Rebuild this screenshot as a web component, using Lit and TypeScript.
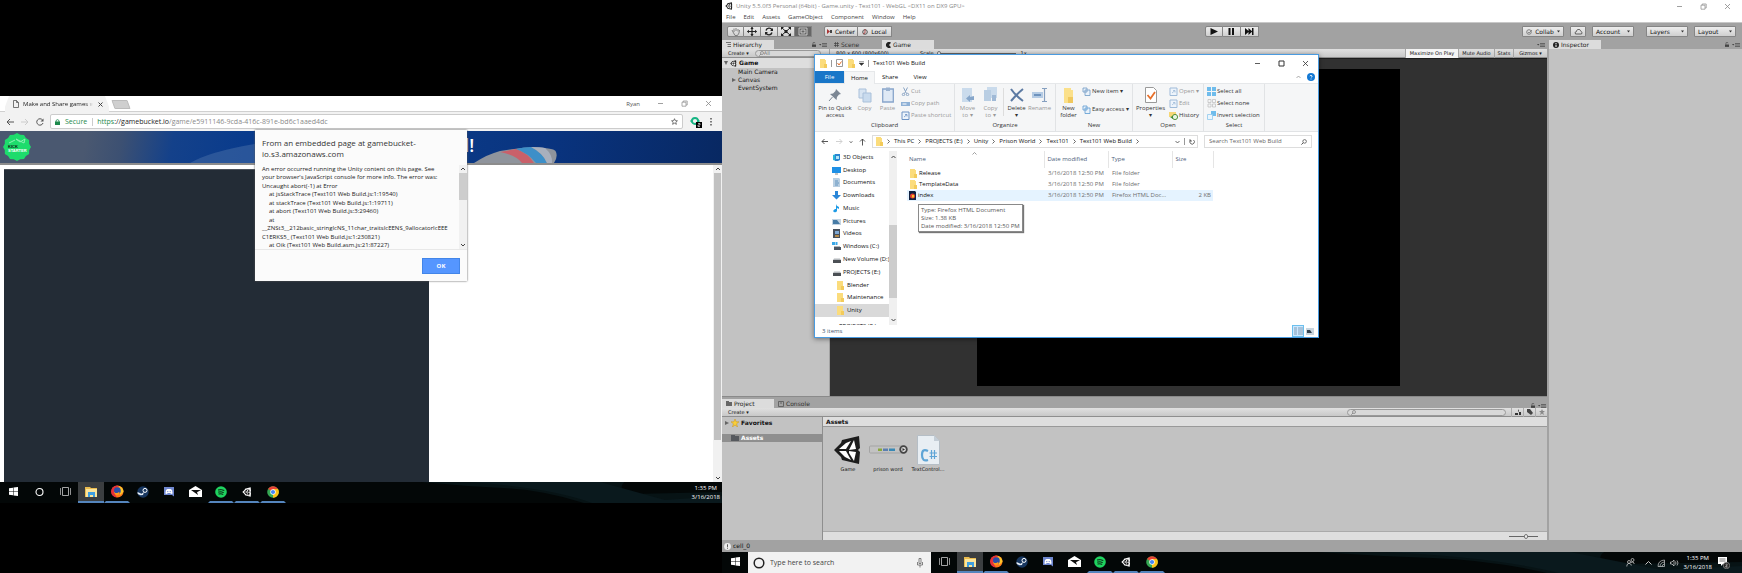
import { LitElement, html, css, svg, nothing } from "lit";
import { customElement, property } from "lit/decorators.js";
import { classMap } from "lit/directives/class-map.js";

const base = css`
  * { box-sizing: border-box; }
  button, input { font: inherit; color: inherit; margin: 0; padding: 0; border: 0; background: none; min-width: 0; outline: none; border-radius: 0; }
  button { display: flex; align-items: center; justify-content: center; white-space: nowrap; line-height: inherit; }
  a { color: inherit; text-decoration: none; }
  ul { list-style: none; margin: 0; padding: 0; }
  svg { display: block; flex: none; }
`;

const icon = (w: number, h: number, box: string, body: unknown) =>
  html`<svg width=${w} height=${h} viewBox=${box} fill="none" aria-hidden="true">${body}</svg>`;

/* ---- shared pictures ---- */
const winMin = icon(7, 7, "0 0 7 7", svg`<path d="M1 3.5h5" stroke="currentColor" stroke-width=".8"/>`);
const winMax = icon(7, 7, "0 0 7 7", svg`<path d="M1 1h5v5H1z" stroke="currentColor"/>`);
const winRestore = icon(7, 7, "0 0 7 7", svg`<path d="M1 2.2h4v4H1zM2.2 2V1h4v4H5.2" stroke="currentColor" stroke-width=".7"/>`);
const winClose = icon(7, 7, "0 0 7 7", svg`<path d="M1 1l5 5M6 1L1 6" stroke="currentColor" stroke-width=".8"/>`);
const folder = icon(8, 9, "0 0 8 9", svg`<path d="M1 0h5v1h1v8H1z" fill="#fbdc7c"/><path d="M5 5h3v4H5z" fill="#f3cb5b"/>`);
const unityMark = (s: number, c: string) =>
  icon(s, s, "0 0 30 30", svg`<path d="M1 15L8 8l1-3L26 1l1 12-2 2 2 2-1 12-17-4-1-3z" fill=${c}/><path d="M6 14l7-6 5-2-5 8zM21 5l2 9-7 1zM16 16l7 1-2 9-5-8zM6 16h7l5 9-6-3z" fill=${c === "#fff" ? "#111" : "#fff"}/>`);
const lockIcon = icon(4, 5, "0 0 5 6", svg`<path d="M0 3h5v3H0z" fill="#444"/><path d="M1.2 3V1.4a1.2 1.2 0 012.4 0" stroke="#444" stroke-width=".8"/>`);
const menuIcon = icon(8, 5, "0 0 8 5", svg`<path d="M0 2h2.4L1.2 3.5z" fill="#444"/><path d="M3 1.5h5M3 3h5M3 4.5h5" stroke="#555" stroke-width=".8"/>`);
const lens = icon(6, 6, "0 0 6 6", svg`<circle cx="3.6" cy="2.4" r="1.8" stroke="currentColor" stroke-width=".8"/><path d="M2.3 3.7L.4 5.6" stroke="currentColor"/>`);

/* ---- taskbar pictures ---- */
const appIcons: Record<string, unknown> = {
  start: icon(9, 9, "0 0 9 9", svg`<path d="M0 1.2L4 .7v3.5H0zM4.5.6L9 0v4.2H4.5zM0 4.8h4v3.5l-4-.5zM4.5 4.8H9V9l-4.5-.6z" fill="#fff"/>`),
  cortana: icon(9, 10, "0 0 9 10", svg`<circle cx="4.5" cy="5" r="3.5" stroke="#fff" stroke-width="1.1"/>`),
  views: icon(11, 9, "0 0 11 9", svg`<path d="M2.5.5h6v8h-6zM1 1.5H.4v6H1M10 1.5h.6v6H10" stroke="#ccc" stroke-width=".8"/>`),
  files: icon(13, 12, "0 0 13 12", svg`<path d="M0 1h5l1 1h6v9H0z" fill="#e9bb4e"/><path d="M1 3h11v8H1z" fill="#fbe59c"/><path d="M3 6h7v5H8V9H5v2H3z" fill="#3f9fe0"/>`),
  firefox: icon(13, 13, "0 0 13 13", svg`<circle cx="6.5" cy="6.5" r="6" fill="#ff7a18"/><path d="M6 .5a6 6 0 000 12A7 7 0 018 1z" fill="#e5303a"/><path d="M8 1c3 1 4.5 3 4.5 6L9 10z" fill="#ffc52b"/><circle cx="6.4" cy="5.7" r="3.4" fill="#2b4fa8"/><path d="M2.8 6.5c1 2 4 2 5 .5l1 1C8 11 3 10.5 2.8 6.5z" fill="#ff9b1c"/>`),
  steam: icon(12, 12, "0 0 12 12", svg`<circle cx="6" cy="6" r="5.7" fill="#17365f"/><circle cx="8" cy="4.4" r="2" stroke="#fff"/><path d="M.5 6l4 1.7L7 6 6 9l-2.500.3L.7 8z" fill="#e5edf7"/>`),
  discord: icon(10, 11, "0 0 10 11", svg`<path d="M0 1h10v9.5L8 9H0z" fill="#6f87cf"/><path d="M2 4l1.5-1h3L8 4l.6 3.4L7 8l-.7-1H3.7L3 8l-1.6-.6z" fill="#fff"/><circle cx="3.8" cy="5.6" r=".7" fill="#6f87cf"/><circle cx="6.2" cy="5.6" r=".7" fill="#6f87cf"/>`),
  mail: icon(13, 11, "0 0 13 11", svg`<path d="M0 4l6.5-4L13 4v7H0z" fill="#fff"/><path d="M2 4h10L8 6.2 9 9z" fill="#111"/>`),
  spotify: icon(12, 12, "0 0 12 12", svg`<circle cx="6" cy="6" r="5.8" fill="#1ed35f"/><path d="M3 4q3.3-1 6.3.5M3.2 6.1q3-.8 5.5.5M3.5 8q2.5-.6 4.7.4" stroke="#0c1f12"/>`),
  unity: unityMark(10, "#fff"),
  chrome: icon(12, 12, "0 0 12 12", svg`<circle cx="6" cy="6" r="5.8" fill="#35a853"/><path d="M1 3a5.8 5.8 0 0110 0L6 6z" fill="#e84335"/><path d="M11 3a5.8 5.8 0 01-5 8.800L6 6V3z" fill="#fbc116"/><circle cx="6" cy="6" r="2.7" fill="#fff"/><circle cx="6" cy="6" r="2.1" fill="#4485f4"/>`),
};
const pinned = ["files", "firefox", "steam", "discord", "mail", "spotify", "unity", "chrome"];
const running = new Set(["files", "firefox", "spotify", "unity", "chrome"]);

@customElement("task-bar")
class TaskBar extends LitElement {
  @property({ type: Boolean }) primary = false;
  static styles = [base, css`
    :host { display: flex; height: 21px; background: #030707; color: #fff; font: 6px/9px "Open Sans", "Noto Sans", sans-serif; position: relative; }
    .scene { position: absolute; right: 0; top: 0; width: 45%; height: 100%; }
    .bar { display: flex; flex: 1; position: relative; min-width: 0; }
    .app { width: 26px; border-bottom: 2px solid transparent; }
    .running { border-bottom-color: #5585bd; border-left: 2px solid transparent; border-right: 2px solid transparent; }
    .active { background: #3b3e40; border-left: 0; border-right: 0; }
    .search { flex: 0 1 183px; display: flex; align-items: center; gap: 5px; background: #f2f2f2; color: #444; padding: 0 8px 0 5px; font-size: 7px; }
    .search input { flex: 1; }
    .search input::placeholder { color: #444; opacity: 1; }
    .tray { margin-left: auto; display: flex; align-items: center; gap: 5px; padding-right: 2px; }
    .tray.wide { padding-right: 12px; }
    .clock { text-align: center; white-space: nowrap; }
  `];
  render() {
    const app = (name: string) => html`<button aria-label=${name} class=${classMap({ app: true, running: running.has(name), active: name === "files" })}>${appIcons[name]}</button>`;
    return html`
      <svg class="scene" viewBox="0 0 400 21" preserveAspectRatio="none" aria-hidden="true">
        <path d="M30 0h250q-10 8 10 12l110-2v11H230Q180 8 130 6T30 0z" fill="#071315"/><path d="M90 0h160L330 18 400 14v7H240Q190 6 90 0z" fill="#0a191d"/>
      </svg>
      <div class="bar">
        ${app("start")}
        ${this.primary
          ? html`<label class="search">${icon(12, 12, "0 0 12 12", svg`<circle cx="6" cy="6" r="4.8" stroke="#222" stroke-width="1.5"/>`)}
              <input aria-label="Search" placeholder="Type here to search" />
              ${icon(6, 10, "0 0 6 10", svg`<path d="M2 .5h2v5H2zM.5 4v3h5V4M3 7v2.5" stroke="#555" stroke-width=".7"/>`)}</label>`
          : app("cortana")}
        ${app("views")}${pinned.map(app)}
        <div class=${classMap({ tray: true, wide: this.primary })}>
          ${this.primary ? html`
            ${icon(9, 9, "0 0 9 9", svg`<circle cx="3" cy="4" r="1.5" stroke="#ddd" stroke-width=".7"/><circle cx="6.5" cy="2" r="1.5" stroke="#ddd" stroke-width=".7"/><path d="M.8 8.5c0-4 4-4 4.5-1M5 4.5q2.5-2 3.3 1.5" stroke="#ddd" stroke-width=".7"/>`)}
            <span></span>
            ${icon(7, 6, "0 0 7 6", svg`<path d="M.5 4.5l3-3 3 3" stroke="#ddd" stroke-width=".9"/>`)}
            ${icon(8, 8, "0 0 8 8", svg`<path d="M1 7.5q0-6 6.5-6.5M3 7.5q0-4 4.5-4.5M5 7.5q0-2 2.5-2.5M7.5 1v6.5H1" stroke="#ccc" stroke-width=".7"/>`)}
            ${icon(9, 8, "0 0 9 8", svg`<path d="M.5 3H2l2-2v6l-2-2H.5zM5.5 2.5q1 1.5 0 3M7 1.5q2 2.5 0 5" stroke="#ddd" stroke-width=".7"/>`)}` : nothing}
          <time class="clock">1:35 PM<br />3/16/2018</time>
          ${this.primary ? html`<span>${icon(13, 13, "0 0 13 13", svg`<path d="M1 1h9v7H6l-2 2V8H1z" fill="#fff"/><path d="M2.5 3h6M2.5 5h6" stroke="#444" stroke-width=".7"/><circle cx="9.5" cy="9.5" r="3.2" fill="#222" stroke="#aaa" stroke-width=".6"/><path d="M8.6 8.7q1-1 1.7 0l-1.7 2.3h2" stroke="#fff" stroke-width=".6"/>`)}</span>` : nothing}
        </div>
      </div>`;
  }
}

const trace: [string, boolean][] = [
  ["An error occurred running the Unity content on this page. See", false],
  ["your browser's JavaScript console for more info. The error was:", false],
  ["Uncaught abort(-1) at Error", false],
  ["at jsStackTrace (Text101 Web Build.js:1:19540)", true],
  ["at stackTrace (Text101 Web Build.js:1:19711)", true],
  ["at abort (Text101 Web Build.js:3:29460)", true],
  ["at", true],
  ["__ZNSt3__212basic_stringIcNS_11char_traitsIcEENS_9allocatorIcEEE", false],
  ["C1ERKS5_ (Text101 Web Build.js:1:230821)", false],
  ["at Oik (Text101 Web Build.asm.js:21:87227)", true],
];

@customElement("chrome-window")
class ChromeWindow extends LitElement {
  static styles = [base, css`
    :host { display: flex; flex-direction: column; position: relative; background: #fff; color: #222; font: 6px/8px "Open Sans", "Noto Sans", sans-serif; }
    .strip { display: flex; height: 16px; padding-left: 5px; border-bottom: 1px solid #d0d0d0; }
    .tab { position: relative; display: flex; align-items: center; gap: 4px; width: 104px; padding: 0 6px 0 8px; height: 16px; background: #f2f2f2; clip-path: polygon(4px 0, 100px 0, 106px 16px, -2px 16px); }
    .tab span { flex: 1; overflow: hidden; white-space: nowrap; mask-image: linear-gradient(90deg, #000 90%, transparent); }
    .tab button { width: 6px; height: 6px; }
    .newtab { width: 16px; height: 9px; margin: 4px 0 0 4px; background: #cfcfcf; border: 1px solid #bbb; transform: skewX(20deg); border-radius: 1px; }
    .controls { margin-left: auto; display: flex; align-items: center; gap: 17px; padding-right: 10px; color: #888; }
    .user { color: #555; }
    .nav { display: flex; align-items: center; height: 19px; background: #f2f2f2; gap: 6px; padding: 0 7px 0 5px; }
    .nav > button { width: 9px; }
    .address { flex: 1; display: flex; align-items: center; height: 15px; border: 1px solid #ccc; background: #fff; border-radius: 2px; padding: 0 4px; font-size: 7px; margin: 0 2px 0 0; white-space: nowrap; }
    .secure { display: flex; align-items: center; gap: 5px; color: #1d8a4c; padding-right: 5px; margin-right: 4px; border-right: 1px solid #ccc; }
    .dim { color: #8a8a8a; } .green { color: #1d8a4c; }
    .star { margin-left: auto; }
    .banner { position: relative; height: 34px; border-bottom: 2px solid #8c8c8c; background: linear-gradient(100deg, #4a5870 0 12%, #3c5072 17%, #14418a 24%, #093b8c 34%, #0b3a86 60%, #093480 75%, #082862); overflow: hidden; }
    .banner svg { position: absolute; inset: 0; width: 100%; height: 100%; }
    .banner .badge { position: absolute; left: 3px; top: 2px; }
    .banner .badge svg { position: static; width: 28px; height: 28px; }
    .kick { position: absolute; left: 5px; top: 12px; font: 900 4px/4px "Liberation Sans", sans-serif; color: #0b1a10; }
    .kick b { color: #fff; display: block; }
    .headline { position: absolute; left: 458px; top: 2px; margin: 0; color: #fff; font: 600 18px/24px "Open Sans", sans-serif; }
    .page { flex: 1; display: flex; padding-left: 4px; min-height: 0; }
    .canvas { width: 425px; margin-top: 4px; background: #232c36; border-top: 1px solid #4a5058; }
    .scroll { margin-left: auto; width: 9px; background: #f1f1f1; display: flex; flex-direction: column; align-items: center; justify-content: space-between; padding: 2px 0; }
    .thumb { flex: 1; width: 7px; background: #c1c1c1; margin: 2px 0 0; }
    .page .thumb { margin-bottom: 36px; }
    .dialog { position: absolute; left: 255px; top: 34px; width: 212px; height: 151px; background: #fbfbfb; box-shadow: 0 0 2px #555; display: flex; flex-direction: column; }
    .dialog h1 { margin: 0; padding: 7px 7px 6px; font: 400 8px/11px "Open Sans", "Noto Sans", sans-serif; color: #333; height: 35px; }
    .log { display: flex; height: 85px; border-bottom: 1px solid #e8e8e8; padding-left: 7px; }
    .lines { flex: 1; display: flex; flex-direction: column; justify-content: space-between; white-space: nowrap; min-width: 0; }
    .deep { padding-left: 7px; }
    .log .scroll { width: 8px; }
    .log .thumb { flex: 0 0 27px; width: 8px; background: #cdcdcd; margin: 2px 0 auto; }
    .ok { align-self: flex-end; margin: 8px 7px 0 0; width: 38px; height: 16px; background: #5596ff; color: #fff; font-weight: 700; border: 1px solid #4285e8; }
  `];
  render() {
    const up = icon(4, 4, "0 0 4 4", svg`<path d="M0 3l2-2 2 2" stroke="#444"/>`);
    const down = icon(4, 4, "0 0 4 4", svg`<path d="M0 1l2 2 2-2" stroke="#444"/>`);
    const points = Array.from({ length: 24 }, (_, i) => {
      const r = i % 2 ? 12.6 : 14, a = (i * Math.PI) / 12;
      return `${14 + r * Math.cos(a)},${14 + r * Math.sin(a)}`;
    }).join(" ");
    return html`
      <div class="strip">
        <div class="tab">${icon(6, 8, "0 0 6 8", svg`<path d="M.5.5h3l2 2v5h-5zM3.5.5v2h2" stroke="#555" stroke-width=".8"/>`)}
          <span>Make and Share games w</span><button aria-label="Close tab">${icon(5, 5, "0 0 5 5", svg`<path d="M.5.5l4 4M4.5.5l-4 4" stroke="#444"/>`)}</button></div>
        <button class="newtab" aria-label="New tab"></button>
        <div class="controls"><span class="user">Ryan</span>${winMin}${winRestore}${winClose}</div>
      </div>
      <div class="nav">
        <button aria-label="Back">${icon(8, 8, "0 0 8 8", svg`<path d="M8 4H1M4 1L1 4l3 3" stroke="#555"/>`)}</button>
        <button aria-label="Forward">${icon(8, 8, "0 0 8 8", svg`<path d="M0 4h7M4 1l3 3-3 3" stroke="#ccc"/>`)}</button>
        <button aria-label="Reload">${icon(8, 8, "0 0 8 8", svg`<path d="M6.5 2A3.2 3.2 0 107 5" stroke="#555"/><path d="M7.5.5v3h-3z" fill="#555"/>`)}</button>
        <div class="address">
          <span class="secure">${icon(5, 6, "0 0 5 6", svg`<path d="M0 2.5h5V6H0z" fill="#1d8a4c"/><path d="M1 3V1.5q1.5-1.7 3 0V3" stroke="#1d8a4c" stroke-width=".8"/>`)}Secure</span>
          <span><span class="green">https</span><span>://gamebucket.io</span><span class="dim">/game/e5911146-9cda-416c-891e-bd6c1aaed4dc</span></span>
          <button class="star" aria-label="Bookmark">${icon(7, 7, "0 0 10 10", svg`<path d="M5 1l1.2 2.8 3 .2-2.3 2 .8 3L5 7.4 2.3 9l.8-3L.8 4l3-.2z" stroke="#444"/>`)}</button>
        </div>
        <button aria-label="Extension">${icon(12, 13, "0 0 12 13", svg`<circle cx="5" cy="6" r="3" stroke="#17b584" stroke-width="1.8"/><path d="M0 6l2-2v4zM10 6L8 4v4z" fill="#17b584"/><path d="M6 7h6v6H6z" fill="#000"/><path d="M8 8.5h2v1.5H8v1.5h2" stroke="#fff" stroke-width=".6"/>`)}</button>
        <button aria-label="Menu">${icon(2, 8, "0 0 2 8", svg`<path d="M1 0v1.6M1 3v1.6M1 6v1.6" stroke="#555" stroke-width="1.5"/>`)}</button>
      </div>
      <div class="banner">
        <svg viewBox="0 0 722 32" preserveAspectRatio="none" aria-hidden="true">
          <path d="M190 32Q210 20 260 12v20z" fill="#3f67a3" opacity=".6"/>
          <path d="M474 32Q488 23 500 20l14-2q16-3 31-1 11 1 11 4 2 5-2 11z" fill="#8f949c"/>
          <path d="M500 21l16-3q12 4 18 14h-12q-6-8-22-11z" fill="#c9606a"/>
          <path d="M516 18q8-2 15-2 12 6 16 16h-11q-8-10-20-14z" fill="#3d8fc8"/>
          <path d="M531 16q9 0 14 1 8 7 7 15h-5q-4-10-16-16z" fill="#a9b0bd"/>
        </svg>
        <h2 class="headline">d!</h2>
        <a class="badge" href="#" aria-label="Kickstarter">${icon(28, 28, "0 0 28 28", svg`<polygon points=${points} fill="#1edc6c"/><path d="M6 10l6-3M13 6l4 3 5-3-1 4z" stroke="#8df0b5"/>`)}<span class="kick">KICK<b>STARTER</b></span></a>
      </div>
      <div class="page"><div class="canvas"></div><div class="scroll">${up}<div class="thumb"></div>${down}</div></div>
      <div class="dialog" role="dialog" aria-labelledby="t">
        <h1 id="t">From an embedded page at gamebucket-<br />io.s3.amazonaws.com</h1>
        <div class="log">
          <div class="lines">${trace.map(([t, deep]) => html`<div class=${classMap({ deep })}>${t}</div>`)}</div>
          <div class="scroll">${up}<div class="thumb"></div>${down}</div>
        </div>
        <button class="ok">OK</button>
      </div>`;
  }
}

/* ---- file explorer ---- */
const ribbonBig: Record<string, unknown> = {
  pin: icon(14, 14, "0 0 14 14", svg`<path d="M8 1l5 5-2 .5L9 9l-.5 3L2 6l3-.5L7.5 3z" fill="#7c8794"/><path d="M4.5 9L1 13" stroke="#7c8794"/>`),
  copy: icon(14, 15, "0 0 14 15", svg`<path d="M1 1h7v9H1z" fill="#d7e4f2" stroke="#a9c0da"/><path d="M5 5h8v9H5z" fill="#c9dbee" stroke="#a9c0da"/>`),
  paste: icon(12, 16, "0 0 12 16", svg`<path d="M.7 2h10.6v13H.7z" fill="#dfe9f5" stroke="#88a5cb" stroke-width="1.3"/><path d="M4 .5h4V4H4z" fill="#9ab2d0"/>`),
  move: icon(14, 16, "0 0 14 16", svg`<path d="M1 1h10v14H1z" fill="#cadbec"/><path d="M13 9v4H9v2L5 11.5 9 8v2z" fill="#86a6ca"/>`),
  copyto: icon(15, 16, "0 0 15 16", svg`<path d="M4 0h10v11H4z" fill="#cadbec"/><path d="M1 3h7v11H1z" fill="#b9cee3"/><path d="M9 8h4v6H9z" fill="#9fb9d6"/>`),
  del: icon(14, 14, "0 0 14 14", svg`<path d="M1 1q4 6 12 12M13 1Q8 5 1 13" stroke="#5c7aa3" stroke-width="2"/>`),
  rename: icon(16, 14, "0 0 16 14", svg`<path d="M0 4h11v6H0z" fill="#b4cbe4"/><path d="M2 6h7v2H2z" fill="#6f93bd"/><path d="M10 .5h5M12.5.5v13M10 13.5h5" stroke="#86a0c0" stroke-width="1.2"/>`),
  folder: icon(11, 15, "0 0 11 15", svg`<path d="M1 0h7v2h2v13H1z" fill="#fbe08a"/><path d="M5 9h5v6H5z" fill="#f0c85e"/>`),
  props: icon(12, 16, "0 0 12 16", svg`<path d="M.5.5h8l3 3v12H.5z" fill="#fff" stroke="#9a9a9a"/><path d="M2.5 8l3 3.5L10 5" stroke="#e8702a" stroke-width="1.8"/>`),
};
const small = (c: string, kind = 0) => icon(9, 9, "0 0 9 9", [
  svg`<path d="M1 1h4v4H1zM3 3h5v5.5H3z" fill="#eaf2fa" stroke=${c} stroke-width=".8"/>`,
  svg`<path d="M2.5.5l3 6M6.5.5l-3 6" stroke=${c}/><circle cx="2.5" cy="7.5" r="1.2" stroke=${c}/><circle cx="6.5" cy="7.5" r="1.2" stroke=${c}/>`,
  svg`<path d="M0 3h9v4H0z" fill=${c}/><path d="M1.5 5h4" stroke="#fff"/>`,
  svg`<path d="M1 1h7v7.5H1z" fill="#eef4fb" stroke=${c}/><path d="M3 6l3-2.5M4 3.5h2v2" stroke=${c} stroke-width=".8"/>`,
  svg`<path d="M0 0h4v4H0zM5 0h4v4H5zM0 5h4v4H0zM5 5h4v4H5z" fill="#6fbcec"/>`,
  svg`<path d="M1 .5h3v3H1zM5.5.5h3v3h-3zM1 5h3v3H1zM5.5 5h3v3h-3z" stroke="#bbb" stroke-width=".7"/>`,
  svg`<path d="M4 0h5v5H4z" fill="#6fbcec"/><path d="M.5 3.5h5v5h-5z" fill="#eaf5fd" stroke="#8fc9ee" stroke-width=".8"/>`,
  svg`<path d="M0 1h7v5H0z" fill="#f6d775"/><circle cx="6" cy="6" r="2.6" fill="#e9f5e4" stroke="#57943e"/><path d="M1 6l3-1v3z" fill="#3d8b37"/>`,
][kind]);

const side: [string, number, boolean][] = [
  ["3D Objects", 0, false], ["Desktop", 1, false], ["Documents", 2, false], ["Downloads", 3, false], ["Music", 4, false], ["Pictures", 5, false], ["Videos", 6, false],
  ["Windows (C:)", 7, false], ["New Volume (D:)", 8, false], ["PROJECTS (E:)", 8, false], ["Blender", 9, true], ["Maintenance", 9, true], ["Unity", 9, true],
];
const sideIcons = [
  svg`<path d="M1 2l3-1v7L1 7z" fill="#29b6d8"/><path d="M3 1h5v6l-2 1H3z" fill="#2c86d2"/><path d="M4 3h3v3H4z" fill="#b3e6f6"/>`,
  svg`<path d="M0 1h9v6H0z" fill="#1e90e6"/><path d="M3 8h3" stroke="#888"/>`,
  svg`<path d="M1 0h6l1 1v8H1z" fill="#b9cfe2"/><path d="M3 3h3M3 5h4M3 7h3" stroke="#4c86b8" stroke-width=".8"/>`,
  svg`<path d="M3 0h3v4h3L4.5 8.5 0 4h3z" fill="#2a86d8"/>`,
  svg`<path d="M4 0q0 2 3 3v2L5 4v3q-1 2-3 1t1-3h1z" fill="#1e9be6"/>`,
  svg`<path d="M0 2h9v6H0z" fill="#c4d4e2"/><path d="M1 3h4l3 4H1z" fill="#467ba6"/>`,
  svg`<path d="M1 0h7v9H1z" fill="#47515e"/><path d="M3 2h4v3H3z" fill="#7fa9d5"/><path d="M3 6h4v2H3z" fill="#b58c4c"/>`,
  svg`<path d="M0 0h3v3H0zM3.5 0h2v3h-2z" fill="#3aa8e8"/><path d="M2 5h7v3H2z" fill="#4b5663"/><path d="M2 4h6v1H2z" fill="#b0b6bc"/>`,
  svg`<path d="M1 5h8v3H1z" fill="#4b4f54"/><path d="M2 3.5h6L9 5H1z" fill="#b5b9bd"/>`,
  svg`<path d="M1 0h6v9H1z" fill="#fbdc7c"/><path d="M5 5h3v4H5z" fill="#f3cb5b"/>`,
];

@customElement("explorer-window")
class ExplorerWindow extends LitElement {
  static styles = [base, css`
    :host { display: flex; flex-direction: column; background: #fff; border: 1px solid #4a9be0; color: #111; font: 6px/7px "Open Sans", "Noto Sans", sans-serif; box-shadow: 0 1px 5px rgba(0, 0, 0, .45); }
    .title { display: flex; align-items: center; height: 16px; gap: 4px; padding: 0 9px 0 4px; }
    .rule { width: 1px; height: 7px; background: #999; }
    .title .controls { margin-left: auto; display: flex; gap: 17px; color: #333; }
    .tabs { display: flex; height: 13px; align-items: stretch; border-bottom: 1px solid #e6e8ea; }
    .tabs button { width: 30px; }
    .tabs .file { background: #1976c8; color: #fff; width: 29px; }
    .tabs .home { background: #f5f6f7; width: 31px; height: 13px; border: 1px solid #e6e8ea; border-bottom: 0; }
    .help { margin-left: auto; display: flex; align-items: center; gap: 6px; padding-right: 3px; }
    .ribbon { display: flex; height: 48px; background: #f5f6f7; border-bottom: 1px solid #e1e3e5; }
    .group { display: grid; grid-template-rows: 1fr 9px; border-right: 1px solid #e1e3e5; text-align: center; color: #333; }
    .clip { width: 140px; } .org { width: 101px; } .new { width: 77px; } .open { width: 71px; } .sel { width: 61px; }
    .items { display: flex; padding: 2px 0 0 1px; }
    .clip .items { padding-left: 2px; }
    .big { flex: none; flex-direction: column; justify-content: flex-start; gap: 2px; width: 23px; padding-top: 1px; line-height: 7px; }
    .big span { height: 15px; }
    .big .pic { height: 16px; display: flex; align-items: center; }
    .open .wide { width: 33px; } .clip .wide { width: 36px; }
    .off { color: #999; }
    .split { width: 1px; background: #ddd; margin: 2px 1px 6px; }
    .col { display: flex; flex-direction: column; justify-content: space-between; padding-left: 2px; height: 35px; }
    .col button { justify-content: flex-start; gap: 1px; height: 11px; }
    .where { display: flex; align-items: center; height: 19px; padding: 0 6px; gap: 6px; color: #555; }
    .path { flex: 1; display: flex; align-items: center; height: 13px; border: 1px solid #ddd; gap: 4px; padding: 0 2px; color: #111; white-space: nowrap; }
    .path .end { margin-left: auto; display: flex; align-items: center; gap: 4px; }
    .find { flex: 0 0 108px; display: flex; align-items: center; height: 13px; border: 1px solid #ddd; padding: 0 4px; }
    .find input { flex: 1; } .find input::placeholder { color: #666; opacity: 1; }
    .body { flex: 1; display: flex; min-height: 0; }
    .side { width: 74px; overflow: hidden; display: flex; flex-direction: column; }
    .tree { display: grid; grid-auto-rows: 1fr; height: 166px; flex: none; }
    .tree a, .more { display: flex; align-items: center; gap: 2px; padding-left: 17px; white-space: nowrap; }
    .tree a.sub { padding-left: 21px; } .tree a.on { background: #d9d9d9; }
    .more { padding: 6px 0 0 24px; }
    .bar { width: 8px; background: #f0f0f0; display: flex; flex-direction: column; align-items: center; justify-content: space-between; padding: 4px 0 3px; }
    .bar i { width: 8px; height: 73px; background: #cdcdcd; margin-top: 56px; }
    .list { flex: 1; position: relative; padding-left: 10px; }
    table { border-collapse: collapse; table-layout: fixed; width: 306px; color: #6d6d6d; }
    th { font-weight: 400; text-align: left; height: 17px; padding: 0 0 0 3px; color: #4c607a; border-right: 1px solid #e5e5e5; background: #fff; }
    td { height: 11px; padding: 0 0 0 4px; white-space: nowrap; }
    th:first-child, td:first-child { padding-left: 2px; }
    .name { display: flex; gap: 2px; align-items: center; color: #111; }
    .num { text-align: right; padding-right: 2px; }
    .hot { background: #e5f3ff; }
    .sort { position: absolute; left: 75px; top: 1px; }
    .tip { position: absolute; left: 21px; top: 53px; border: 1px solid #8a8a8a; background: #fff; color: #575757; padding: 1px 2px; line-height: 8px; white-space: nowrap; box-shadow: 1px 1px 1px #777; }
    .status { display: flex; align-items: center; height: 12px; padding: 0 2px 0 7px; color: #44566e; }
    .status .views { margin-left: auto; display: flex; align-items: center; }
    .views button { width: 12px; height: 12px; } .views .on { background: #cce8ff; border: 1px solid #6cc0ee; }
  `];
  big(name: string, text: unknown, off = false, wide = false) {
    return html`<button class=${classMap({ big: true, off, wide })}><span class="pic">${ribbonBig[name]}</span><span>${text}</span></button>`;
  }
  row(kind: number, c: string, text: string, off = false) {
    return html`<button class=${classMap({ off })}>${small(c, kind)}${text}</button>`;
  }
  render() {
    const crumbs = ["This PC", "PROJECTS (E:)", "Unity", "Prison World", "Text101", "Text101 Web Build"];
    const chev = icon(3, 5, "0 0 3 5", svg`<path d="M.5.5l2 2-2 2" stroke="#444" stroke-width=".8"/>`);
    const check = icon(7, 8, "0 0 7 8", svg`<path d="M.5.5h6v7h-6z" fill="#fff" stroke="#999"/><path d="M1.5 4L3 6l2.5-3.5" stroke="#e8702a"/>`);
    const fox = icon(7, 9, "0 0 7 9", svg`<path d="M0 0h6l1 1v8H0z" fill="#10203f"/><circle cx="3.5" cy="5" r="2.5" fill="#e7432f"/><path d="M3 4h2v2.5H3z" fill="#fcbf2a"/>`);
    const files: [unknown, string, string, string][] = [[folder, "Release", "File folder", ""], [folder, "TemplateData", "File folder", ""], [fox, "index", "Firefox HTML Doc...", "2 KB"]];
    return html`
      <div class="title">${folder}<i class="rule"></i>${check}${folder}
        ${icon(5, 5, "0 0 5 5", svg`<path d="M0 .5h5M0 2h5L2.5 4.5z" fill="#333" stroke="#333" stroke-width=".4"/>`)}<i class="rule"></i><span>Text101 Web Build</span>
        <div class="controls">${winMin}${winMax}${winClose}</div></div>
      <div class="tabs"><button class="file">File</button><button class="home">Home</button><button>Share</button><button>View</button>
        <div class="help">${icon(5, 4, "0 0 5 4", svg`<path d="M.5 3l2-2 2 2" stroke="#888" stroke-width=".7"/>`)}
        ${icon(8, 8, "0 0 8 8", svg`<circle cx="4" cy="4" r="4" fill="#1479d4"/><path d="M2.8 3q1.2-1.6 2.4 0Q5 4 4 4.5M4 5.5v1" stroke="#fff" stroke-width=".8"/>`)}</div></div>
      <div class="ribbon">
        <div class="group clip"><div class="items">${this.big("pin", html`Pin to Quick<br />access`, false, true)}${this.big("copy", "Copy", true)}${this.big("paste", "Paste", true)}
          <div class="col">${this.row(1, "#8aa4c4", "Cut", true)}${this.row(2, "#8fb1d6", "Copy path", true)}${this.row(3, "#6e93c4", "Paste shortcut", true)}</div></div>Clipboard</div>
        <div class="group org"><div class="items">${this.big("move", html`Move<br />to ▾`, true)}${this.big("copyto", html`Copy<br />to ▾`, true)}<i class="split"></i>${this.big("del", html`Delete<br />▾`)}${this.big("rename", "Rename", true)}</div>Organize</div>
        <div class="group new"><div class="items">${this.big("folder", html`New<br />folder`)}
          <div class="col">${this.row(0, "#6f9bc4", "New item ▾")}${this.row(0, "#5a9bd0", "Easy access ▾")}<span></span></div></div>New</div>
        <div class="group open"><div class="items">${this.big("props", html`Properties<br />▾`, false, true)}
          <div class="col">${this.row(3, "#9fbbd9", "Open ▾", true)}${this.row(3, "#9fbbd9", "Edit", true)}${this.row(7, "", "History")}</div></div>Open</div>
        <div class="group sel"><div class="items"><div class="col">${this.row(4, "", "Select all")}${this.row(5, "", "Select none")}${this.row(6, "", "Invert selection")}</div></div>Select</div>
      </div>
      <div class="where">
        ${icon(8, 7, "0 0 8 7", svg`<path d="M7 3.5H1M3.5 1L1 3.5 3.5 6" stroke="#444" stroke-width=".9"/>`)}
        ${icon(8, 7, "0 0 8 7", svg`<path d="M1 3.5h6M4.5 1L7 3.5 4.5 6" stroke="#ccc" stroke-width=".9"/>`)}
        ${icon(4, 4, "0 0 4 4", svg`<path d="M.5 1L2 3l1.5-2" stroke="#777" stroke-width=".8"/>`)}
        ${icon(7, 8, "0 0 7 8", svg`<path d="M3.5 7.5V1M1 3.5L3.5 1 6 3.5" stroke="#444" stroke-width=".9"/>`)}
        <nav class="path">${folder}${chev}${crumbs.map((c) => html`<a href="#">${c}</a>${chev}`)}
          <span class="end">${icon(5, 4, "0 0 5 4", svg`<path d="M.5 1l2 2 2-2" stroke="#444" stroke-width=".8"/>`)}<i class="rule"></i>${icon(6, 6, "0 0 6 6", svg`<path d="M4.5 1A2.3 2.3 0 111.5 1.2M1 .2V2h2" stroke="#444" stroke-width=".8"/>`)}</span></nav>
        <label class="find"><input aria-label="Search folder" placeholder="Search Text101 Web Build" />${lens}</label>
      </div>
      <div class="body">
        <nav class="side"><div class="tree">${side.map(([t, i, sub]) => html`<a href="#" class=${classMap({ sub, on: t === "Unity" })}>${icon(9, 9, "0 0 9 9", sideIcons[i])}${t}</a>`)}</div><a class="more" href="#">PROJECTS (E:)</a></nav>
        <div class="bar">${icon(5, 4, "0 0 5 4", svg`<path d="M.5 3l2-2 2 2" stroke="#444"/>`)}<i></i><span></span>${icon(5, 4, "0 0 5 4", svg`<path d="M.5 1l2 2 2-2" stroke="#444"/>`)}</div>
        <div class="list">
          <span class="sort">${icon(5, 3, "0 0 5 3", svg`<path d="M.5 2.5l2-2 2 2" stroke="#777" stroke-width=".7"/>`)}</span>
          <table>
            <colgroup><col width="137" /><col width="64" /><col width="64" /><col width="41" /></colgroup>
            <thead><tr><th>Name</th><th>Date modified</th><th>Type</th><th>Size</th></tr></thead>
            <tbody>${files.map(([i, n, k, s]) => html`<tr class=${classMap({ hot: !!s })}><td><span class="name">${i}${n}</span></td><td>3/16/2018 12:50 PM</td><td>${k}</td><td class="num">${s}</td></tr>`)}</tbody>
          </table>
          <div class="tip" role="tooltip">Type: Firefox HTML Document<br />Size: 1.38 KB<br />Date modified: 3/16/2018 12:50 PM</div>
        </div>
      </div>
      <div class="status">3 items<div class="views">
        <button class="on" aria-label="Details">${icon(9, 8, "0 0 9 8", svg`<path d="M0 1h3M0 3h3M0 5h3M0 7h3M4 1h5M4 3h5M4 5h5M4 7h5" stroke="#6e8ba3" stroke-width=".8"/>`)}</button>
        <button aria-label="Large icons">${icon(8, 7, "0 0 8 7", svg`<path d="M0 0h8v7H0z" fill="#c9d6e0"/><path d="M1 2h3l2 3H1z" fill="#33424f"/>`)}</button></div></div>`;
  }
}

@customElement("unity-editor")
class UnityEditor extends LitElement {
  static styles = [base, css`
    :host { display: flex; flex-direction: column; background: #a2a2a2; color: #111; font: 6px/8px "DejaVu Sans", sans-serif; }
    .title, .menu { background: #fff; font-family: "Open Sans", "Noto Sans", sans-serif; display: flex; align-items: center; }
    .title { height: 12px; padding: 0 11px 0 3px; gap: 3px; color: #888; }
    .title .controls { margin-left: auto; display: flex; gap: 17px; color: #888; }
    .menu { height: 11px; gap: 8px; padding-left: 4px; color: #444; border-bottom: 1px solid #c8c8c8; }
    .tools { display: grid; grid-template-columns: 1fr auto 1fr; align-items: center; height: 17px; padding: 0 6px 0 5px; }
    .left, .right, .set { display: flex; }
    .left { gap: 12px; } .right { justify-content: flex-end; gap: 6px; }
    .set button, .right button { height: 11px; background: linear-gradient(#ededed, #cfcfcf); border: 1px solid #858585; border-left-width: 0; gap: 3px; }
    .set button:first-child, .right button { border-left-width: 1px; border-radius: 2px 0 0 2px; }
    .right button { border-radius: 1px; justify-content: space-between; padding: 0 3px; width: 42px; }
    .right .cloud { width: 16px; padding: 0; justify-content: center; }
    .right .gap { width: 0; }
    .sq { width: 17px; } .set .on { background: #666; } .txt { width: 34px; } .play { width: 18px; }
    .main { flex: 1; display: flex; gap: 2px; min-height: 0; }
    .work { flex: 1; display: flex; flex-direction: column; min-width: 0; }
    .upper { flex: 1; display: flex; gap: 1px; min-height: 0; }
    .panel { display: flex; flex-direction: column; min-width: 0; }
    .hier { width: 107px; } .game { flex: 1; } .insp { width: 193px; }
    .tabs { height: 9px; display: flex; align-items: center; padding-right: 2px; }
    .tabs button { height: 9px; padding: 0 4px; gap: 2px; color: #333; width: 52px; justify-content: flex-start; }
    .tabs .on { background: #dcdcdc; color: #222; }
    .tabs .end { margin-left: auto; display: flex; gap: 3px; align-items: center; }
    .fill { flex: 1; background: #c2c2c2; }
    .bar { height: 9px; background: linear-gradient(#e0e0e0, #c8c8c8); border-bottom: 1px solid #8e8e8e; display: flex; align-items: center; font-size: 5px; padding-left: 6px; white-space: nowrap; }
    .bar button { height: 9px; }
    .pill { display: flex; align-items: center; height: 7px; border: 1px solid #999; border-radius: 4px; background: #d8d8d8; color: #777; padding: 0 3px; }
    .pill input { flex: 1; width: 100%; height: 5px; line-height: 5px; } .pill input::placeholder { color: #777; opacity: 1; }
    .hier .pill { width: 66px; margin-left: 6px; }
    .pill svg { width: 5px; height: 5px; }
    .tree li { height: 8px; padding-left: 16px; display: flex; align-items: center; }
    .tree .root { height: 10px; background: #dedede; font-weight: 700; padding-left: 2px; gap: 2px; }
    .tree .kid { padding-left: 10px; gap: 2px; }
    .stage { flex: 1; background: #313131; display: grid; place-items: center; min-height: 0; border-top: 1px solid #1c1c1c; }
    .view { height: 94%; aspect-ratio: 4 / 3; background: #000; }
    .game .bar button { border-left: 1px solid #a5a5a5; padding: 0 2px; }
    .game .bar .on { background: #f4f4f4; width: 53px; margin-left: auto; } .mute { width: 36px; } .stats { width: 19px; } .giz { width: 34px; }
    .dims { width: 84px; }
    input[type="range"] { appearance: none; height: 5px; background: linear-gradient(#666, #666) center / 100% 1px no-repeat; }
    input[type="range"]::-webkit-slider-thumb { appearance: none; width: 4px; height: 5px; border-radius: 2px; background: #eee; border: 1px solid #777; }
    .scale { width: 79px; margin: 0 4px; }
    .project { height: 144px; border-top: 1px solid #8a8a8a; }
    .project .tabs { height: 11px; align-items: flex-end; padding-right: 1px; }
    .search { margin-left: auto; width: 159px; margin-right: 5px; }
    .bar .mini { width: 12px; border-left: 1px solid #aaa; }
    .split { flex: 1; display: flex; min-height: 0; }
    .dirs { width: 101px; background: #c2c2c2; border-right: 1px solid #8e8e8e; font-weight: 700; }
    .dirs li { display: flex; align-items: center; gap: 2px; height: 8px; padding-left: 3px; }
    .dirs li:first-child { height: 11px; margin-bottom: 6px; }
    .dirs .on { background: #8f8f8f; color: #fff; padding-left: 9px; }
    .assets { flex: 1; display: flex; flex-direction: column; background: #c2c2c2; }
    .crumb { height: 10px; background: #dedede; border-bottom: 1px solid #999; padding: 1px 3px; font-weight: 700; }
    .grid { flex: 1; display: flex; padding: 7px 5px; font-size: 5px; }
    .cell { width: 40px; text-align: center; }
    .cell .pic { height: 31px; display: grid; place-items: center; }
    .foot { height: 9px; background: #dedede; border-top: 1px solid #aaa; display: flex; justify-content: flex-end; align-items: center; padding-right: 9px; }
    .foot input { width: 29px; }
    .status { height: 12px; display: flex; align-items: center; gap: 2px; padding-left: 2px; }
  `];
  render() {
    const t = (b: unknown) => icon(10, 9, "0 0 10 9", b);
    const tri = (open: boolean) => icon(4, 4, "0 0 4 4", svg`<path d=${open ? "M0 0h4L2 4z" : "M0 0v4l4-2z"} fill="#666"/>`);
    const caret = icon(3, 3, "0 0 3 3", svg`<path d="M0 .5h3L1.5 2.5z" fill="#333"/>`);
    const end = html`<span class="end">${lockIcon}${menuIcon}</span>`;
    return html`
      <div class="title">${unityMark(8, "#222")}<span>Unity 5.5.0f3 Personal (64bit) - Game.unity - Text101 - WebGL &lt;DX11 on DX9 GPU&gt;</span><div class="controls">${winMin}${winRestore}${winClose}</div></div>
      <nav class="menu">${["File", "Edit", "Assets", "GameObject", "Component", "Window", "Help"].map((m) => html`<button>${m}</button>`)}</nav>
      <div class="tools">
        <div class="left">
          <div class="set">
            <button class="sq" aria-label="Hand">${t(svg`<path d="M2 5L1 3M3 5V1.5M5 4V1M7 4.5V2M8.5 3L8 6 6.5 8.5H4L2 5" stroke="#777" stroke-width=".9"/>`)}</button>
            <button class="sq" aria-label="Move">${t(svg`<path d="M5 0v9M.5 4.5h9" stroke="#222" stroke-width="1.2"/><path d="M5 0l1.7 2H3.3zM5 9l1.7-2H3.3zM0 4.5l2-1.7v3.4zM10 4.5L8 2.8v3.4z" fill="#222"/>`)}</button>
            <button class="sq" aria-label="Rotate">${t(svg`<path d="M8 3A3.2 3.2 0 002 3.5M2 6a3.2 3.2 0 006-.5" stroke="#222" stroke-width="1.4"/><path d="M9 1v3H6zM1 8V5h3z" fill="#222"/>`)}</button>
            <button class="sq" aria-label="Scale">${t(svg`<path d="M1 1l8 7M9 1L1 8" stroke="#222"/><path d="M3.5 3h3v3h-3z" fill="#222"/><path d="M0 0h3L0 3zM10 0H7l3 3zM0 9h3L0 6zM10 9H7l3-3z" fill="#222"/>`)}</button>
            <button class="sq on" aria-label="Rect">${t(svg`<path d="M1 1h8v7H1zM3 3h4v3H3z" stroke="#ddd" stroke-width=".8"/>`)}</button>
          </div>
          <div class="set">
            <button class="txt">${icon(5, 5, "0 0 5 5", svg`<path d="M0 0l3 2.5L0 5z" fill="#a33"/><path d="M3 1h2v3H3z" fill="#444"/>`)}Center</button>
            <button class="txt">${icon(6, 6, "0 0 6 6", svg`<circle cx="3" cy="3" r="2.3" stroke="#555"/><path d="M3 0v4L1 5" stroke="#a33" stroke-width=".8"/>`)}Local</button>
          </div>
        </div>
        <div class="set">
          <button class="play" aria-label="Play">${t(svg`<path d="M1.5 1v7L9 4.5z" fill="#111"/>`)}</button>
          <button class="play" aria-label="Pause">${t(svg`<path d="M2.5 1h2v7h-2zM6 1h2v7H6z" fill="#111"/>`)}</button>
          <button class="play" aria-label="Step">${t(svg`<path d="M1 1v7l3.5-3v3L8 4.8V8h1.5V1H8v3.2L4.5 1v3z" fill="#111"/>`)}</button>
        </div>
        <div class="right">
          <button>${icon(6, 6, "0 0 6 6", svg`<circle cx="3" cy="3" r="2.3" stroke="#777" stroke-width=".9"/><path d="M2 3l1 1 3-3" stroke="#777" stroke-width=".8"/>`)}Collab${caret}</button>
          <button class="cloud" aria-label="Cloud">${icon(9, 7, "0 0 9 7", svg`<path d="M1.5 6h6q1.5-1.7-.5-2.5Q6 .5 3.8 1.5 2.5 2 2.5 3.5 0 4 1.5 6z" stroke="#444" stroke-width=".8"/>`)}</button>
          <button>Account${caret}</button><span class="gap"></span><button>Layers${caret}</button><button>Layout${caret}</button>
        </div>
      </div>
      <div class="main">
        <div class="work">
          <div class="upper">
            <section class="panel hier">
              <div class="tabs"><button class="on">${icon(5, 5, "0 0 5 5", svg`<path d="M0 .5h5M1.5 2.5H5M1.5 4.5H5" stroke="#555" stroke-width=".8"/>`)}Hierarchy</button>${end}</div>
              <div class="bar"><button>Create ▾</button><label class="pill">${lens}<input aria-label="Filter objects" placeholder="All" /></label></div>
              <ul class="tree fill"><li class="root">${tri(true)}${unityMark(7, "#222")}Game</li><li>Main Camera</li><li class="kid">${tri(false)}Canvas</li><li>EventSystem</li></ul>
            </section>
            <section class="panel game">
              <div class="tabs"><button>${icon(5, 5, "0 0 5 5", svg`<path d="M1.5 0v5M3.5 0v5M0 1.5h5M0 3.5h5" stroke="#444" stroke-width=".7"/>`)}Scene</button>
                <button class="on">${icon(5, 6, "0 0 5 6", svg`<path d="M5 .8A3 3 0 105 5.2L3 3z" fill="#222"/>`)}Game</button><span class="end">${menuIcon}</span></div>
              <div class="bar"><span class="dims">800 x 600 (800x600)</span><label for="z">Scale</label><input id="z" class="scale" type="range" value="0" /><span>1x</span>
                <button class="on">Maximize On Play</button><button class="mute">Mute Audio</button><button class="stats">Stats</button><button class="giz">Gizmos ▾</button></div>
              <div class="stage"><div class="view"></div></div>
            </section>
          </div>
          <section class="panel project">
            <div class="tabs"><button class="on">${icon(6, 5, "0 0 6 5", svg`<path d="M0 0h3v1h3v4H0z" fill="#666"/>`)}Project</button><button>${icon(6, 6, "0 0 6 6", svg`<path d="M.5.5h5v5h-5zM2 2h2" stroke="#555" stroke-width=".8"/>`)}Console</button>${end}</div>
            <div class="bar"><button>Create ▾</button><label class="pill search">${lens}<input aria-label="Search assets" /></label>
              <button class="mini" aria-label="Type">${icon(6, 6, "0 0 6 6", svg`<path d="M3 0l1 2-1 1zM0 4h3v2H0zM4 3h2v3H4z" fill="#333"/>`)}</button><button class="mini" aria-label="Label">${icon(6, 6, "0 0 6 6", svg`<path d="M0 0h3l3 4-2 2-4-3z" fill="#444"/>`)}</button><button class="mini" aria-label="Save">${icon(6, 6, "0 0 10 10", svg`<path d="M5 0l1.5 3.5H10L7 6l1.2 4L5 7.5 1.8 10 3 6 0 3.5h3.5z" fill="#888"/>`)}</button></div>
            <div class="split">
              <ul class="dirs"><li>${tri(false)}${icon(8, 8, "0 0 10 10", svg`<path d="M5 0l1.5 3.5H10L7 6l1.2 4L5 7.5 1.8 10 3 6 0 3.5h3.5z" fill="#f8cf3a" stroke="#c98f16" stroke-width=".6"/>`)}Favorites</li><li class="on">${icon(8, 6, "0 0 8 6", svg`<path d="M0 0h4v1h4v5H0z" fill="#56595e"/>`)}Assets</li></ul>
              <div class="assets">
                <div class="crumb">Assets</div>
                <div class="grid">
                  <div class="cell"><div class="pic">${unityMark(30, "#1c1c1c")}</div>Game</div>
                  <div class="cell"><div class="pic">${icon(39, 9, "0 0 39 9", svg`<rect x=".5" y="1" width="36" height="7" rx="1" fill="#c2c2c2" stroke="#a4a4a4"/><path d="M9 3.5h4v2.5H9z" fill="#8aa83c"/><path d="M14 3.5h5v2.5h-5z" fill="#5c7fb0"/><path d="M20 3.5h6v2.5h-6z" fill="#3989b5"/><circle cx="34.5" cy="4.5" r="3.3" fill="#ddd" stroke="#444" stroke-width="1.8"/><path d="M33.5 3l2.5 1.5L33.5 6z" fill="#333"/>`)}</div>prison word</div>
                  <div class="cell"><div class="pic">${icon(23, 30, "0 0 23 30", svg`<path d="M.5.5H17l5.5 5.5v23.5H.5z" fill="#e8eef3" stroke="#b5bec6"/><path d="M17 .5V6h5.5z" fill="#c3cdd6"/><path d="M11 16Q5 13 5 20t6 5" stroke="#5fa5d6" stroke-width="2.2"/><path d="M14.5 15v9M17.5 15v9M12.5 18H20M12.5 21.5H20" stroke="#5fa5d6" stroke-width="1.2"/>`)}</div>TextControl...</div>
                </div>
                <div class="foot"><input type="range" aria-label="Icon size" value="60" /></div>
              </div>
            </div>
          </section>
        </div>
        <section class="panel insp"><div class="tabs"><button class="on">${icon(6, 6, "0 0 6 6", svg`<circle cx="3" cy="3" r="3" fill="#222"/><path d="M3 1v1M3 2.6V5" stroke="#fff"/>`)}Inspector</button>${end}</div><div class="fill"></div></section>
      </div>
      <div class="status">${icon(7, 7, "0 0 7 7", svg`<circle cx="3.5" cy="3.5" r="3.4" fill="#eee"/><path d="M3.5 1.3v2.6M3.5 4.7v1" stroke="#555"/>`)}cell_0</div>`;
  }
}

@customElement("app-root")
class AppRoot extends LitElement {
  static styles = [base, css`
    :host { display: grid; grid-template-columns: minmax(0, 722fr) minmax(0, 1020fr); height: 100vh; background: #000; overflow: hidden; }
    .second, .first { display: flex; flex-direction: column; min-height: 0; }
    .second { padding: 96px 0 70px; }
    .first { position: relative; }
    chrome-window, unity-editor { flex: 1; min-height: 0; }
    explorer-window { position: absolute; left: 92px; top: 54px; width: 505px; height: 284px; }
  `];
  render() {
    return html`
      <div class="second"><chrome-window></chrome-window><task-bar></task-bar></div>
      <div class="first"><unity-editor></unity-editor><explorer-window></explorer-window><task-bar primary></task-bar></div>`;
  }
}
